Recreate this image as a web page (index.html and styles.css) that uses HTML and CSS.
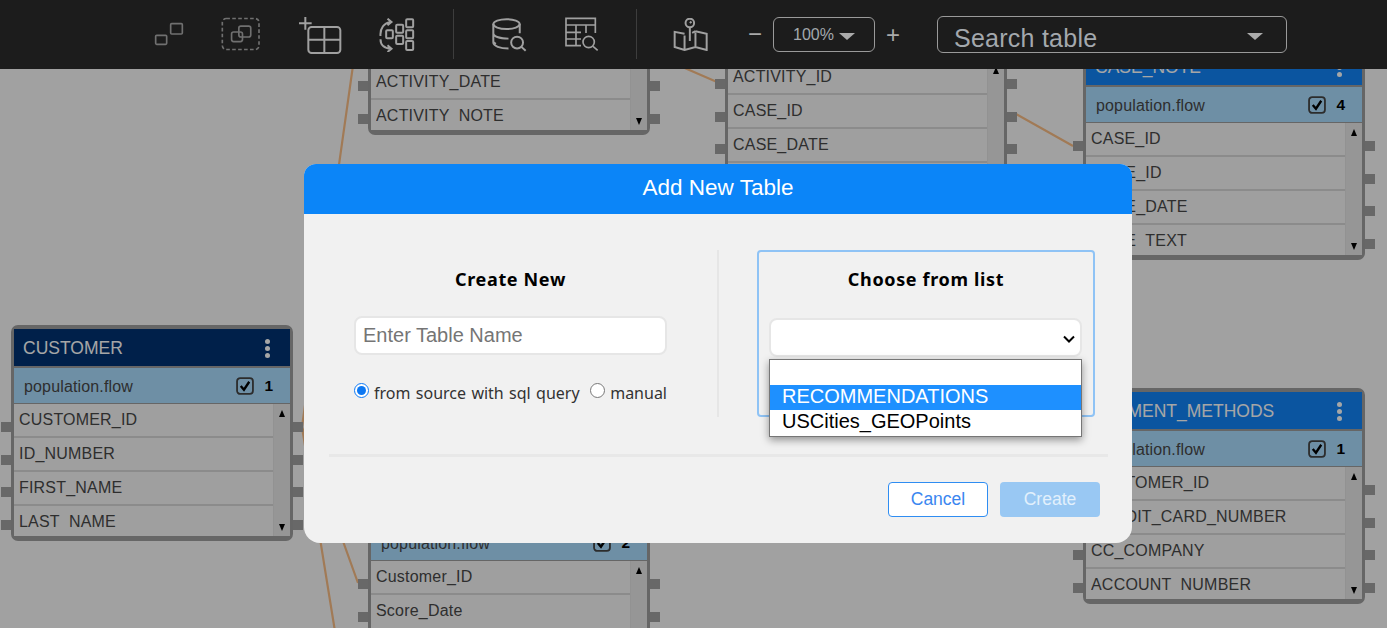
FILE: index.html
```html
<!DOCTYPE html>
<html lang="en">
<head>
<meta charset="utf-8">
<title>Add New Table</title>
<link rel="stylesheet" href="styles.css">
</head>
<body>
<header class="toolbar">
  <svg class="ico i1" viewBox="72 66 90 72"><rect x="77" y="106" width="33" height="27" rx="3"/><rect x="122" y="71" width="35" height="31" rx="3"/></svg>
  <svg class="ico i2" viewBox="275 52 118 102"><rect x="279" y="56" width="111" height="94" rx="12" stroke-dasharray="11 7"/><rect x="307" y="97" width="33" height="29" rx="6"/><rect x="329" y="79" width="36" height="33" rx="6"/></svg>
  <svg class="ico i3" viewBox="508 50 132 114"><path d="M511 69H549M530 50V88M587 80V158M540 118H634"/><rect x="539" y="80" width="96" height="78" rx="10"/></svg>
  <svg class="ico i4" viewBox="750 54 110 102"><path d="M757 108C755 85 768 68 788 66M778 56L790 66L778 76M757 118C757 135 768 146 788 146M778 136L790 146L778 156"/><rect x="774" y="91" width="20" height="24" rx="3"/><rect x="804" y="74" width="21" height="24" rx="3"/><rect x="804" y="107" width="21" height="25" rx="3"/><rect x="834" y="58" width="21" height="24" rx="3"/><rect x="834" y="91" width="21" height="24" rx="3"/><rect x="834" y="123" width="21" height="27" rx="3"/></svg>
  <span class="vsep s1"></span>
  <svg class="ico i5" viewBox="1086 54 106 102"><ellipse cx="1130" cy="72" rx="40" ry="15"/><path d="M1090 72V128C1090 138 1110 146 1136 146M1170 72V100M1090 100C1092 110 1112 116 1136 116M1090 126C1092 128 1094 130 1098 132"/><circle cx="1162" cy="128" r="18"/><path d="M1175 141L1188 153"/></svg>
  <svg class="ico i6" viewBox="42 52 102 102"><path d="M90 138H45V56H133V100M45 76H133M45 98H90M45 118H90M75 76V138M105 76V100"/><circle cx="113" cy="127" r="17"/><path d="M126 140L140 152"/></svg>
  <span class="vsep s2"></span>
  <svg class="ico i7" viewBox="371 55 104 100"><circle cx="421" cy="70" r="13"/><path d="M421 85V125M421 70L426 66M405 103L375 97V143L405 152L438 143L472 152V103L438 95M405 108V152M438 100V143M428 100L438 95"/></svg>
  <span class="zoomsign minus">&minus;</span>
  <div class="zoombox"><span>100%</span><i class="caret"></i></div>
  <span class="zoomsign plus">+</span>
  <div class="search"><span class="search-text">Search table</span><i class="caret big"></i></div>
</header>

<main class="canvas">
  <svg class="edges" viewBox="0 69 1387 559">
    <path d="M302 427L358 30M302 427L338 650M302 427L358 583M657 56L717 82M1016 114L1073 146"/>
  </svg>

  <section class="node customer">
    <div class="ports left"><i></i><i></i><i></i><i></i></div>
    <div class="ports right"><i></i><i></i><i></i><i></i></div>
    <div class="head navy"><span>CUSTOMER</span><b class="kebab"><i></i><i></i><i></i></b></div>
    <div class="sub"><span>population.flow</span><svg class="chk" viewBox="0 0 17 17"><rect x="1" y="1" width="15" height="15" rx="3"/><path d="M4.5 8.5L7.5 12L12.5 4.5"/></svg><b>1</b></div>
    <div class="body"><div class="rows"><div class="row">CUSTOMER_ID</div><div class="row">ID_NUMBER</div><div class="row">FIRST_NAME</div><div class="row"><span>LAST_NAME</span></div></div><div class="sbar"><i class="up"></i><i class="down"></i></div></div>
  </section>

  <section class="node activity">
    <div class="ports left"><i></i><i></i><i></i><i></i></div>
    <div class="ports right"><i></i><i></i><i></i><i></i></div>
    <div class="head blue"></div>
    <div class="sub"></div>
    <div class="body"><div class="rows"><div class="row"></div><div class="row"></div><div class="row">ACTIVITY_DATE</div><div class="row"><span>ACTIVITY_NOTE</span></div></div><div class="sbar"><i class="up"></i><i class="down"></i></div></div>
  </section>

  <section class="node case">
    <div class="ports left"><i></i><i></i><i></i><i></i></div>
    <div class="ports right"><i></i><i></i><i></i><i></i></div>
    <div class="head blue"></div>
    <div class="sub"></div>
    <div class="body"><div class="rows"><div class="row">ACTIVITY_ID</div><div class="row">CASE_ID</div><div class="row">CASE_DATE</div><div class="row"></div></div><div class="sbar"><i class="up"></i><i class="down"></i></div></div>
  </section>

  <section class="node note">
    <div class="ports left"><i></i><i></i><i></i><i></i></div>
    <div class="ports right"><i></i><i></i><i></i><i></i></div>
    <div class="head blue"><span>CASE_NOTE</span><b class="kebab"><i></i><i></i><i></i></b></div>
    <div class="sub"><span>population.flow</span><svg class="chk" viewBox="0 0 17 17"><rect x="1" y="1" width="15" height="15" rx="3"/><path d="M4.5 8.5L7.5 12L12.5 4.5"/></svg><b>4</b></div>
    <div class="body"><div class="rows"><div class="row">CASE_ID</div><div class="row">NOTE_ID</div><div class="row">NOTE_DATE</div><div class="row"><span>NOTE_TEXT</span></div></div><div class="sbar"><i class="up"></i><i class="down"></i></div></div>
  </section>

  <section class="node payment">
    <div class="ports left"><i></i><i></i><i></i><i></i></div>
    <div class="ports right"><i></i><i></i><i></i><i></i></div>
    <div class="head blue"><span>PAYMENT_METHODS</span><b class="kebab"><i></i><i></i><i></i></b></div>
    <div class="sub"><span>population.flow</span><svg class="chk" viewBox="0 0 17 17"><rect x="1" y="1" width="15" height="15" rx="3"/><path d="M4.5 8.5L7.5 12L12.5 4.5"/></svg><b>1</b></div>
    <div class="body"><div class="rows"><div class="row">CUSTOMER_ID</div><div class="row">CREDIT_CARD_NUMBER</div><div class="row">CC_COMPANY</div><div class="row"><span>ACCOUNT_NUMBER</span></div></div><div class="sbar"><i class="up"></i><i class="down"></i></div></div>
  </section>

  <section class="node score">
    <div class="ports left"><i></i><i></i><i></i><i></i></div>
    <div class="ports right"><i></i><i></i><i></i><i></i></div>
    <div class="head blue"></div>
    <div class="sub"><span>population.flow</span><svg class="chk" viewBox="0 0 17 17"><rect x="1" y="1" width="15" height="15" rx="3"/><path d="M4.5 8.5L7.5 12L12.5 4.5"/></svg><b>2</b></div>
    <div class="body"><div class="rows"><div class="row">Customer_ID</div><div class="row">Score_Date</div></div><div class="sbar"><i class="up"></i><i class="down"></i></div></div>
  </section>

  <div class="overlay">
    <div class="modal">
      <h1 class="modal-title">Add New Table</h1>
      <div class="cols">
        <div class="col-new">
          <h2 class="col-title">Create New</h2>
          <input class="name" type="text" placeholder="Enter Table Name">
          <div class="radios">
            <label><input type="radio" name="src" checked> from source with sql query</label>
            <label><input type="radio" name="src"> manual</label>
          </div>
        </div>
        <span class="col-sep"></span>
        <div class="col-list">
          <h2 class="col-title">Choose from list</h2>
          <div class="pick">
            <select class="pick-select"><option></option></select>
            <svg class="pick-chevron" viewBox="0 0 12 8"><path d="M1 1.5L6 6.5L11 1.5"/></svg>
            <ul class="pick-menu">
              <li></li>
              <li class="on">RECOMMENDATIONS</li>
              <li class="tall">USCities_GEOPoints</li>
            </ul>
          </div>
        </div>
      </div>
      <hr class="rule">
      <div class="actions">
        <button class="btn cancel">Cancel</button>
        <button class="btn create">Create</button>
      </div>
    </div>
  </div>
</main>
</body>
</html>
```
FILE: styles.css
```css
* { box-sizing: border-box; }
html, body { margin: 0; height: 100%; }
body {
  display: flex;
  flex-direction: column;
  height: 628px;
  overflow: hidden;
  font-family: "Liberation Sans", Arial, sans-serif;
}

/* toolbar */
.toolbar {
  flex: 0 0 69px;
  display: flex;
  align-items: flex-start;
  background: #1c1c1c;
  padding-left: 154px;
}
.ico { display: block; flex: none; fill: none; stroke: #a0a0a0; stroke-width: 6; }
.i1 { width: 30px; height: 24px; margin-top: 22px; stroke: #707070; stroke-width: 5; }
.i2 { width: 39px; height: 34px; margin: 17px 0 0 37px; stroke: #707070; stroke-width: 5; }
.i3 { width: 44px; height: 38px; margin: 17px 0 0 38px; }
.i4 { width: 37px; height: 34px; margin: 18px 0 0 36px; }
.vsep { flex: none; width: 1px; height: 50px; margin-top: 9px; background: #3d3d3d; }
.s1 { margin-left: 38px; }
.i5 { width: 35px; height: 34px; margin: 18px 0 0 38px; }
.i6 { width: 34px; height: 34px; margin: 17px 0 0 38px; stroke-width: 5; }
.s2 { margin-left: 37px; }
.i7 { width: 35px; height: 33px; margin: 18px 0 0 36px; }
.zoomsign { flex: none; color: #aaa; font-size: 24px; line-height: 24px; width: 16px; text-align: center; margin-top: 22px; }
.minus { margin-left: 39px; }
.plus { margin: 23px 0 0 10px; }
.zoombox {
  flex: none;
  display: flex;
  align-items: center;
  justify-content: center;
  gap: 5px;
  width: 102px;
  height: 35px;
  margin: 17px 0 0 10px;
  border: 1px solid #9a9a9a;
  border-radius: 6px;
  color: #a3a8ad;
  font-size: 16px;
}
.caret { display: block; width: 0; height: 0; border-left: 8px solid transparent; border-right: 8px solid transparent; border-top: 7px solid #aaa; margin-top: 4px; }
.search {
  flex: none;
  display: flex;
  align-items: center;
  justify-content: space-between;
  width: 350px;
  height: 37px;
  margin: 16px 0 0 36px;
  padding: 0 23px 0 16px;
  border: 1px solid #9a9a9a;
  border-radius: 6px;
  color: #a3a8ad;
  font-size: 25px;
  letter-spacing: .25px;
}
.search-text { padding-top: 7px; line-height: 28px; }

/* canvas */
.canvas { position: relative; flex: 1; overflow: hidden; background: #f8f8f8; }
.edges { position: absolute; left: 0; top: 0; width: 1387px; height: 559px; fill: none; stroke: #f8bc84; stroke-width: 2.2; }

.node {
  position: absolute;
  width: 282px;
  height: 216px;
  background: #9d9d9d;
  border: solid #9d9d9d;
  border-width: 4px 3px 5px;
  border-radius: 7px;
}
.customer { left: 11px; top: 256px; z-index: 1; }
.activity { left: 368px; top: -150px; }
.case { left: 725px; top: -87px; }
.note { left: 1083px; top: -25px; }
.payment { left: 1083px; top: 319px; }
.score { left: 368px; top: 413px; }

.ports { position: absolute; top: 93px; width: 10px; display: flex; flex-direction: column; gap: 22.67px; }
.ports.left { left: -13px; }
.ports.right { right: -13px; }
.ports i { display: block; height: 10px; background: #a0a0a0; }

.head { display: flex; align-items: center; justify-content: space-between; height: 37px; padding: 1px 20px 0 9px; color: #fff; font-size: 17.5px; }
.navy { background: #003272; }
.blue { background: #1183f6; }
.kebab { display: flex; flex-direction: column; gap: 2px; }
.kebab i { display: block; width: 5px; height: 5px; border-radius: 50%; background: #fff; }

.sub { display: flex; align-items: center; height: 35px; margin-top: 2px; padding: 2px 17px 0 10px; background: #a9dcfe; color: #484848; font-size: 16px; letter-spacing: .15px; }
.sub span { flex: 1; }
.chk { width: 18px; height: 18px; fill: none; stroke: #444; stroke-width: 1.7; margin-top: -2px; }
.chk path { stroke: #000; stroke-width: 2.2; }
.sub b { margin-left: 10px; color: #000; font-size: 15.5px; letter-spacing: 0; margin-top: -2px; }

.body { display: flex; height: 132px; margin-top: 1px; overflow: hidden; background: #f5f5f5; }
.rows { flex: 1; min-width: 0; }
.row { height: 34px; padding: 7px 0 0 5px; border-bottom: 2px solid #d6d6d6; color: #484848; font-size: 16px; line-height: 18px; letter-spacing: .2px; white-space: nowrap; }
.row:last-child { border-bottom: 0; }
.row span { display: block; height: 16px; overflow: hidden; }
.sbar { flex: 0 0 17px; display: flex; flex-direction: column; justify-content: space-between; align-items: center; padding: 6px 0 5px; background: #e6e6e6; border-left: 1px solid #e0e0e0; }
.up, .down { display: block; width: 0; height: 0; border-left: 3.5px solid transparent; border-right: 3.5px solid transparent; }
.up { border-bottom: 7px solid #000; }
.down { border-top: 7px solid #000; }

/* modal */
.overlay { position: absolute; left: 0; top: 0; right: 0; bottom: 0; z-index: 2; display: flex; justify-content: center; align-items: flex-start; padding: 95px 0 0 49px; background: rgba(0, 0, 0, .35); }
.modal { width: 828px; height: 379px; flex: none; background: #f1f1f1; border-radius: 12px 12px 16px 16px; }
.modal-title { margin: 0; height: 50px; background: #0b85f8; border-radius: 12px 12px 0 0; color: #fff; font-size: 22.5px; font-weight: 400; line-height: 48px; text-align: center; }
.cols { display: flex; height: 167px; margin-top: 36px; padding-left: 50px; }
.col-new { width: 313px; }
.col-sep { width: 2px; margin: 0 38px 0 50px; background: #e6e6e6; }
.col-list { width: 338px; border: 2px solid #8fc3f5; border-radius: 4px; padding: 0 11px; }
.col-title { margin: 0; font-family: "Noto Sans", sans-serif; font-size: 18px; font-weight: 700; letter-spacing: .65px; line-height: 25px; text-align: center; color: #000; }
.col-new .col-title { margin-top: 17px; }
.col-list .col-title { margin-top: 15px; }
.name { display: block; width: 313px; height: 39px; margin-top: 24px; padding: 0 7px; border: 2px solid #e6e6e6; border-radius: 8px; background: #fff; font-family: "Liberation Sans", Arial, sans-serif; font-size: 20px; outline: 0; }
.name::placeholder { color: #757575; opacity: 1; }
.radios { display: flex; justify-content: space-between; margin-top: 26px; font-family: "Noto Sans", sans-serif; font-size: 16px; word-spacing: 1.2px; color: #333; line-height: 24px; white-space: nowrap; }
.radios label { display: flex; align-items: center; gap: 5px; }
.radios input { width: 15px; height: 15px; margin: 0 0 5px; accent-color: #0d78f2; }
.pick { position: relative; margin-top: 26px; }
.pick-select { display: block; width: 313px; height: 39px; margin-left: -1px; appearance: none; border: 2px solid #e6e6e6; border-radius: 8px; background-color: #fff; font-size: 20px; outline: 0; }
.pick-chevron { position: absolute; left: 293px; top: 17px; width: 12px; height: 8px; fill: none; stroke: #000; stroke-width: 2; }
.pick-menu { position: absolute; left: -1px; top: 41px; width: 313px; margin: 0; padding: 0; list-style: none; background: #fff; border: 1px solid #767676; box-shadow: 0 3px 8px rgba(0, 0, 0, .4); color: #000; font-size: 20px; line-height: 23px; }
.pick-menu li { height: 25px; padding-left: 12px; }
.pick-menu .tall { height: 26px; }
.pick-menu .on { background: #1e90ff; color: #fff; }
.rule { height: 3px; margin: 37px 24px 0 25px; border: 0; background: #e8e8e8; }
.actions { display: flex; justify-content: flex-end; gap: 12px; margin-top: 25px; padding-right: 32px; }
.btn { width: 100px; height: 35px; padding: 0; border-radius: 4px; font-family: "Liberation Sans", Arial, sans-serif; font-size: 17.5px; }
.cancel { background: #fff; border: 1px solid #2f8df2; color: #3a86f0; }
.create { background: #99c8f3; border: 0; color: #e2f0fc; }
```
